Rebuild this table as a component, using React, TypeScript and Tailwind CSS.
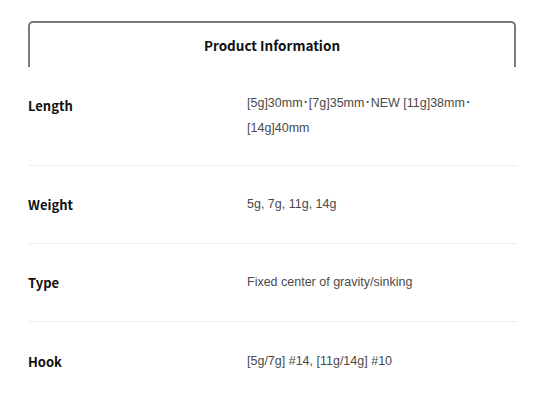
import React from "react";

const rows: { label: string; value: React.ReactNode }[] = [
  {
    label: "Length",
    value: (
      <>
        [5g]30mm･[7g]35mm･NEW [11g]38mm･
        <br />
        [14g]40mm
      </>
    ),
  },
  { label: "Weight", value: "5g, 7g, 11g, 14g" },
  { label: "Type", value: "Fixed center of gravity/sinking" },
  { label: "Hook", value: "[5g/7g] #14, [11g/14g] #10" },
];

export default function App() {
  return (
    <div
      className="w-[533px] h-[413px] bg-white pt-[21px] pl-[28px] pr-[16px] overflow-hidden"
      style={{ fontFamily: '"Noto Sans CJK JP", "Noto Sans", sans-serif' }}
    >
      <div className="h-[46px] border-t-2 border-x-2 border-[#7a7a7a] rounded-t-[5px] mr-[1px] flex items-start justify-center pt-[12px]">
        <span className="text-[13.5px] font-bold text-[#111] leading-[20px]">Product Information</span>
      </div>
      <div className="flex flex-col">
        {rows.map((r, i) => (
          <div
            key={r.label}
            className={`grid grid-cols-[219px_1fr] ${
              i === 0 ? "h-[99px] items-start pt-[24px]" : "h-[78px] items-center"
            } ${i < rows.length - 1 ? "border-b border-[#eeeeee]" : ""}`}
          >
            <div className={`text-[13px] font-bold text-[#111] leading-[25px] ${i === 0 ? "pt-[2px]" : ""}`}>
              {r.label}
            </div>
            <div
              className="text-[12.5px] text-[#4a4a4a] leading-[25px]"
              style={{ fontFamily: '"Liberation Sans", "Noto Sans CJK JP", sans-serif' }}
            >
              {r.value}
            </div>
          </div>
        ))}
      </div>
    </div>
  );
}
